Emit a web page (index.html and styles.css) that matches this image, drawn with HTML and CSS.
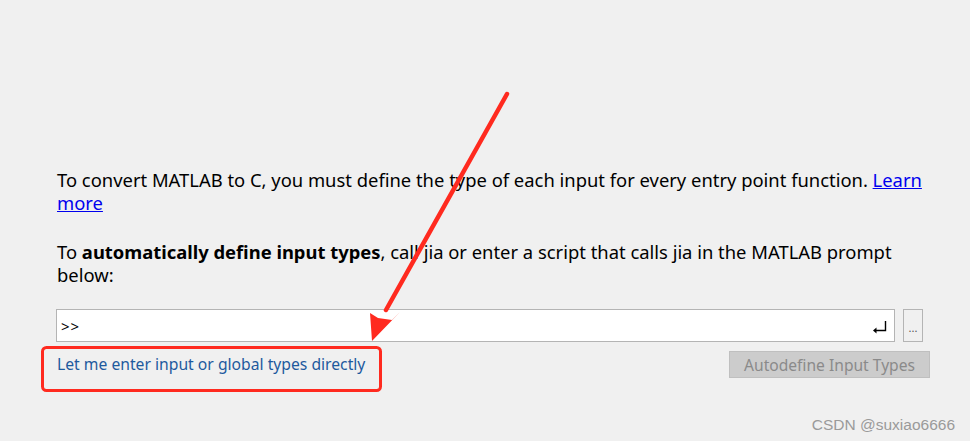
FILE: index.html
```html
<!DOCTYPE html>
<html>
<head>
<meta charset="utf-8">
<link rel="stylesheet" href="styles.css">
</head>
<body>
<div class="page">
  <p class="intro">To convert MATLAB to C, you must define the type of each input for every entry point function. <a class="learn" href="#">Learn more</a></p>
  <p class="intro second">To <b>automatically define input types</b>, call jia or enter a script that calls jia in the MATLAB prompt below:</p>
  <div class="prompt-row">
    <div class="prompt">
      <span class="prompt-text">&gt;&gt;</span>
      <svg class="enter" width="16" height="14" viewBox="0 0 16 14"><path d="M13.5 1 V10.5 H3" fill="none" stroke="#000" stroke-width="1.4"/><path d="M1 10.5 L4.5 7.5 L4.5 13.5 Z" fill="#000"/></svg>
    </div>
    <div class="more-btn">...</div>
  </div>
  <div class="action-row">
    <a class="direct" href="#">Let me enter input or global types directly</a>
    <div class="auto-btn">Autodefine Input Types</div>
  </div>
</div>
<svg class="annot" width="970" height="441" viewBox="0 0 970 441">
  <rect x="42.5" y="347.5" width="338" height="43" rx="4" fill="none" stroke="#ff2a1f" stroke-width="3"/>
  <line x1="507" y1="94" x2="386" y2="310" stroke="#ff2a1f" stroke-width="4.5" stroke-linecap="round"/>
  <path d="M372 341 L370 313 L378 318 L392 320 L400 312 Z" fill="#ff2a1f"/>
</svg>
<div class="watermark">CSDN @suxiao6666</div>
</body>
</html>
```
FILE: styles.css
```css
html, body {
  margin: 0;
  padding: 0;
  background: #f0f0f0;
  width: 970px;
  height: 441px;
  overflow: hidden;
}
.page {
  padding: 168px 40px 0 57px;
  font-family: "Noto Sans", "Open Sans", sans-serif;
  color: #000;
}
.intro {
  margin: 0;
  font-size: 18.4px;
  line-height: 23px;
}
.second {
  margin-top: 26px;
}
.learn {
  color: #0000ee;
  text-decoration: underline;
}
.prompt-row {
  display: flex;
  gap: 8px;
  margin-top: 23px;
  margin-left: -1px;
  height: 33px;
}
.prompt {
  width: 839px;
  border: 1px solid #b4b4b4;
  background: #fff;
  display: flex;
  align-items: center;
  justify-content: space-between;
  padding: 0 6px 0 4px;
  box-sizing: border-box;
}
.prompt-text {
  font-size: 15px;
  letter-spacing: 1px;
}
.enter {
  margin-top: 3px;
}
.more-btn {
  width: 20px;
  border: 1px solid #b4b4b4;
  background: #f0f0f0;
  box-sizing: border-box;
  color: #555;
  font-size: 11px;
  display: flex;
  align-items: center;
  justify-content: center;
  padding-top: 4px;
}
.action-row {
  display: flex;
  justify-content: space-between;
  align-items: center;
  margin-top: 9px;
}
.direct {
  color: #1e5a9e;
  text-decoration: none;
  font-size: 15.7px;
  margin-top: -2px;
}
.auto-btn {
  width: 201px;
  height: 27px;
  box-sizing: border-box;
  background: #cccccc;
  border: 1px solid #bfbfbf;
  color: #8a8a8a;
  font-size: 15.6px;
  display: flex;
  align-items: center;
  justify-content: center;
}
.annot {
  position: absolute;
  left: 0;
  top: 0;
  pointer-events: none;
}
.watermark {
  position: absolute;
  right: 15px;
  top: 416px;
  font-family: "Liberation Sans", Arial, sans-serif;
  font-size: 15.5px;
  color: #9a9a9a;
}
```
